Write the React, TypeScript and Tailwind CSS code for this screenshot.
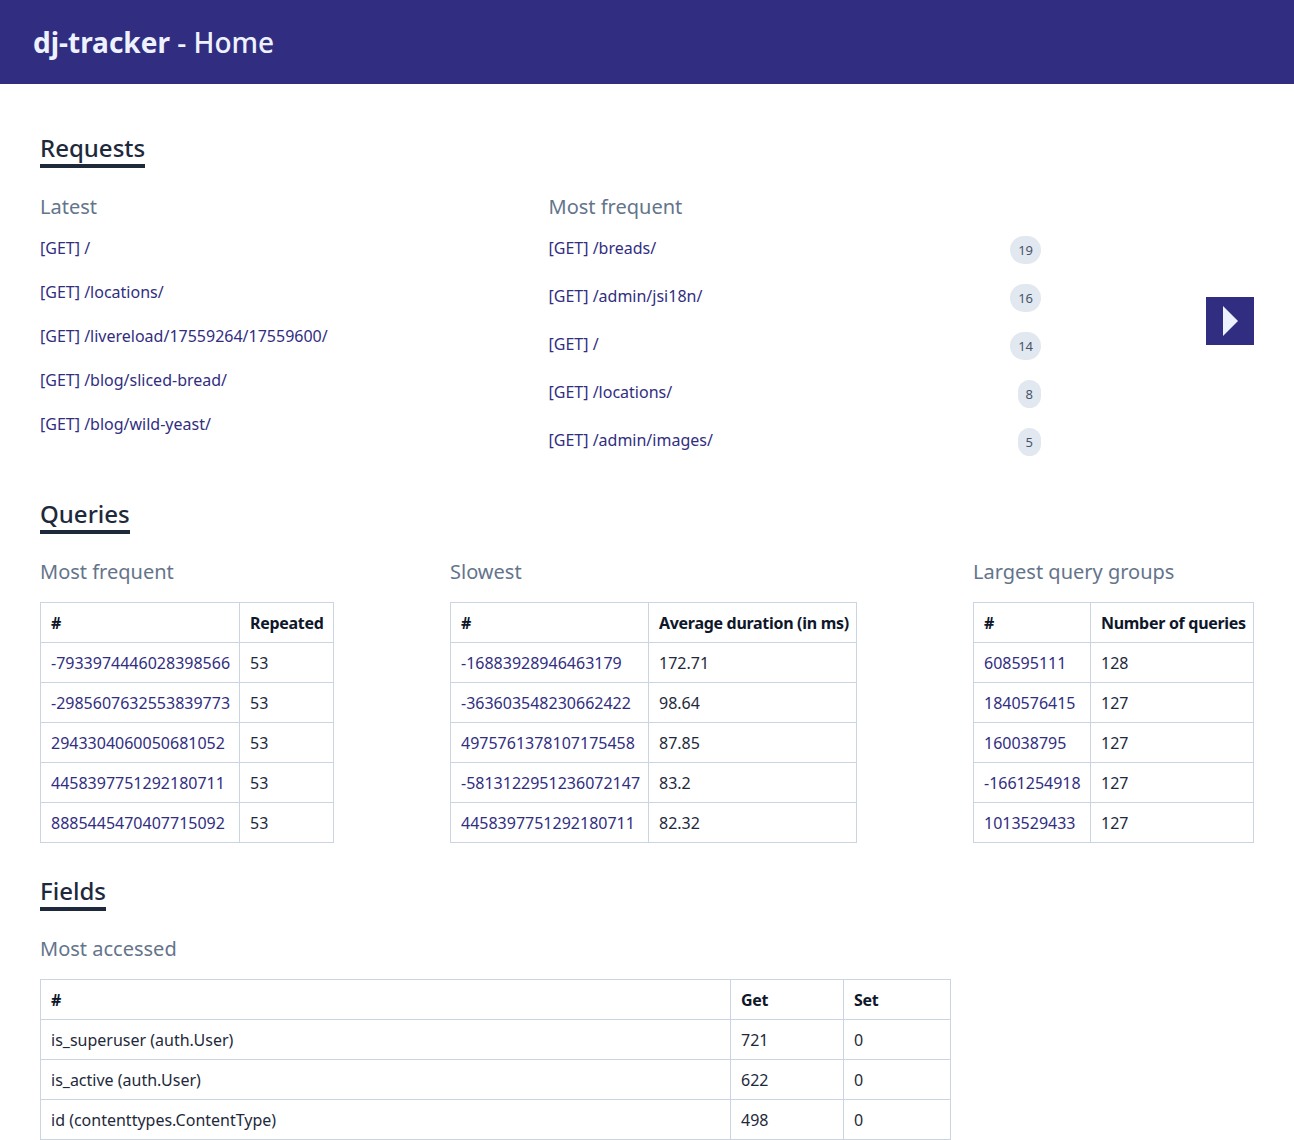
import React from "react";

const latest = [
  "[GET] /",
  "[GET] /locations/",
  "[GET] /livereload/17559264/17559600/",
  "[GET] /blog/sliced-bread/",
  "[GET] /blog/wild-yeast/",
];

const frequent: [string, number][] = [
  ["[GET] /breads/", 19],
  ["[GET] /admin/jsi18n/", 16],
  ["[GET] /", 14],
  ["[GET] /locations/", 8],
  ["[GET] /admin/images/", 5],
];

const mostFrequent = [
  ["-7933974446028398566", "53"],
  ["-2985607632553839773", "53"],
  ["2943304060050681052", "53"],
  ["4458397751292180711", "53"],
  ["8885445470407715092", "53"],
];

const slowest = [
  ["-16883928946463179", "172.71"],
  ["-363603548230662422", "98.64"],
  ["4975761378107175458", "87.85"],
  ["-5813122951236072147", "83.2"],
  ["4458397751292180711", "82.32"],
];

const largest = [
  ["608595111", "128"],
  ["1840576415", "127"],
  ["160038795", "127"],
  ["-1661254918", "127"],
  ["1013529433", "127"],
];

const fields = [
  ["is_superuser (auth.User)", "721", "0"],
  ["is_active (auth.User)", "622", "0"],
  ["id (contenttypes.ContentType)", "498", "0"],
];

function SectionTitle({ children }: { children: React.ReactNode }) {
  return (
    <h2 className="inline-block border-b-4 border-[#1e293b] text-[24px] leading-8 font-medium text-[#1e293b]">
      {children}
    </h2>
  );
}

function SubTitle({ children }: { children: React.ReactNode }) {
  return <h3 className="text-[20px] leading-7 text-[#64748b]">{children}</h3>;
}

const th =
  "h-10 border border-[#cbd5e1] px-[10px] text-left font-bold whitespace-nowrap tracking-[-0.3px] text-[#0f172a]";
const td = "h-10 border border-[#cbd5e1] px-[10px] whitespace-nowrap text-[#1e293b]";

function QueryTable({
  title,
  head,
  rows,
  widths,
  tableWidth,
}: {
  title: string;
  head: string;
  rows: string[][];
  widths: [string, string];
  tableWidth: string;
}) {
  return (
    <div>
      <SubTitle>{title}</SubTitle>
      <table className={`mt-4 table-fixed border-collapse border border-[#cbd5e1] ${tableWidth}`}>
        <thead>
          <tr>
            <th className={`${th} ${widths[0]}`}>#</th>
            <th className={`${th} ${widths[1]}`}>{head}</th>
          </tr>
        </thead>
        <tbody>
          {rows.map((r, i) => (
            <tr key={i}>
              <td className={td}>
                <a href="#" className="text-[#312e81]">
                  {r[0]}
                </a>
              </td>
              <td className={td}>{r[1]}</td>
            </tr>
          ))}
        </tbody>
      </table>
    </div>
  );
}

export default function App() {
  return (
    <div className="min-h-screen bg-white font-['Noto_Sans',sans-serif] text-[16px] leading-6">
      <header className="flex h-[84px] items-center bg-[#312e81] px-[33px]">
        <h1 className="text-[28px] text-[#eef2ff]">
          <span className="font-bold">dj-tracker</span>
          <span className="font-medium"> - Home</span>
        </h1>
      </header>

      <main className="px-10 pt-12">
        <section>
          <SectionTitle>Requests</SectionTitle>
          <div className="mt-[25px] flex items-center">
            <div className="grid w-[1001px] grid-cols-2 gap-4">
              <div>
                <SubTitle>Latest</SubTitle>
                <ul className="mt-[15px] flex flex-col gap-5">
                  {latest.map((l, i) => (
                    <li key={i}>
                      <a href="#" className="text-[#312e81]">
                        {l}
                      </a>
                    </li>
                  ))}
                </ul>
              </div>
              <div>
                <SubTitle>Most frequent</SubTitle>
                <ul className="mt-[15px] flex flex-col gap-5">
                  {frequent.map(([l, n], i) => (
                    <li key={i} className="flex h-7 items-center justify-between">
                      <a href="#" className="pb-1 text-[#312e81]">
                        {l}
                      </a>
                      <span className="flex h-7 items-center rounded-full bg-[#e2e8f0] px-2 text-[13px] text-[#475569]">
                        {n}
                      </span>
                    </li>
                  ))}
                </ul>
              </div>
            </div>
            <button className="mb-2 ml-auto flex h-12 w-12 items-center justify-center bg-[#312e81]">
              <svg width="16" height="30" viewBox="0 0 16 30">
                <path d="M1 0 L16 15 L1 30 Z" fill="#eef2ff" />
              </svg>
            </button>
          </div>
        </section>

        <section className="mt-[42px]">
          <SectionTitle>Queries</SectionTitle>
          <div className="mt-6 flex justify-between">
            <QueryTable
              title="Most frequent"
              head="Repeated"
              rows={mostFrequent}
              widths={["w-[199px]", "w-[94px]"]}
              tableWidth="w-[293px]"
            />
            <QueryTable
              title="Slowest"
              head="Average duration (in ms)"
              rows={slowest}
              widths={["w-[198px]", "w-[208px]"]}
              tableWidth="w-[406px]"
            />
            <QueryTable
              title="Largest query groups"
              head="Number of queries"
              rows={largest}
              widths={["w-[117px]", "w-[163px]"]}
              tableWidth="w-[280px]"
            />
          </div>
        </section>

        <section className="mt-8">
          <SectionTitle>Fields</SectionTitle>
          <div className="mt-6">
            <SubTitle>Most accessed</SubTitle>
            <table className="mt-4 w-[910px] table-fixed border-collapse border border-[#cbd5e1]">
              <thead>
                <tr>
                  <th className={`${th} w-[690px]`}>#</th>
                  <th className={`${th} w-[113px]`}>Get</th>
                  <th className={`${th} w-[107px]`}>Set</th>
                </tr>
              </thead>
              <tbody>
                {fields.map((f, i) => (
                  <tr key={i}>
                    <td className={td}>{f[0]}</td>
                    <td className={td}>{f[1]}</td>
                    <td className={td}>{f[2]}</td>
                  </tr>
                ))}
              </tbody>
            </table>
          </div>
        </section>
      </main>
    </div>
  );
}
